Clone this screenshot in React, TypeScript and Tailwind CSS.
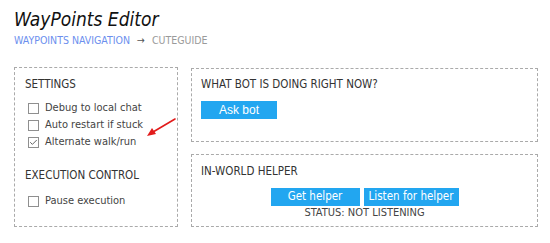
import { Check } from "lucide-react";

const font = { fontFamily: '"DejaVu Sans Condensed", "DejaVu Sans", sans-serif' };

function Box({ label, checked = false }: { label: string; checked?: boolean }) {
  return (
    <label className="flex items-center gap-[6px] h-[17px] text-[11px] text-[#444]">
      <span className="w-[11px] h-[11px] border border-[#8f8f8f] bg-white flex items-center justify-center">
        {checked && <Check className="w-[9px] h-[9px] text-[#333]" strokeWidth={2} />}
      </span>
      {label}
    </label>
  );
}

function Btn({ children, className = "" }: { children: React.ReactNode; className?: string }) {
  return (
    <button className={`h-[18px] bg-[#22a6f0] text-white leading-none ${className}`}>
      {children}
    </button>
  );
}

export default function App() {
  return (
    <div className="relative w-[550px] h-[243px] bg-white pl-[14px] pt-[8px]" style={font}>
      <h1 className="italic text-[19px] leading-[22px] text-[#111]">WayPoints Editor</h1>
      <div className="flex items-center gap-[7px] text-[10.5px] mt-[3px] leading-[14px]">
        <span className="text-[#6c8fee]">WAYPOINTS NAVIGATION</span>
        <span className="text-[#555]">→</span>
        <span className="text-[#9a9a9a]">CUTEGUIDE</span>
      </div>

      <div className="flex gap-[13px] mt-[20px]">
        <section className="w-[164px] h-[160px] border border-dashed border-[#aaa] pl-[10px] pt-[8px]">
          <h2 className="text-[11.5px] text-[#333] leading-[16px]">SETTINGS</h2>
          <div className="mt-[8px] pl-[3px]">
            <Box label="Debug to local chat" />
            <Box label="Auto restart if stuck" />
            <Box label="Alternate walk/run" checked />
          </div>
          <h2 className="text-[11.5px] text-[#333] leading-[16px] mt-[16px]">EXECUTION CONTROL</h2>
          <div className="mt-[10px] pl-[3px]">
            <Box label="Pause execution" />
          </div>
        </section>

        <div className="w-[347px] flex flex-col gap-[12px] pt-px">
          <section className="h-[74px] border border-dashed border-[#aaa] pl-[9px] pt-[7px]">
            <h2 className="text-[11.5px] text-[#333] leading-[16px]">WHAT BOT IS DOING RIGHT NOW?</h2>
            <Btn className="mt-[9px] w-[76px] text-[12px] font-[family-name:'Liberation_Sans',Arial,sans-serif]">
              Ask bot
            </Btn>
          </section>
          <section className="h-[73px] border border-dashed border-[#aaa] pl-[9px] pt-[8px]">
            <h2 className="text-[11.5px] text-[#333] leading-[16px]">IN-WORLD HELPER</h2>
            <div className="flex justify-center gap-[4px] mt-[9px] pr-[9px]">
              <Btn className="w-[89px] text-[11.5px]">Get helper</Btn>
              <Btn className="w-[95px] text-[11.5px]">Listen for helper</Btn>
            </div>
            <p className="text-center text-[11px] text-[#444] leading-[14px] pr-[9px]">
              STATUS: NOT LISTENING
            </p>
          </section>
        </div>
      </div>

      <svg className="absolute left-[144px] top-[116px]" width="34" height="24" viewBox="0 0 34 24">
        <line x1="31" y1="3" x2="9" y2="16" stroke="#e21b1b" strokeWidth="1.6" strokeLinecap="round" />
        <polygon points="3,20 8,12 12,18" fill="#e21b1b" />
      </svg>
    </div>
  );
}
